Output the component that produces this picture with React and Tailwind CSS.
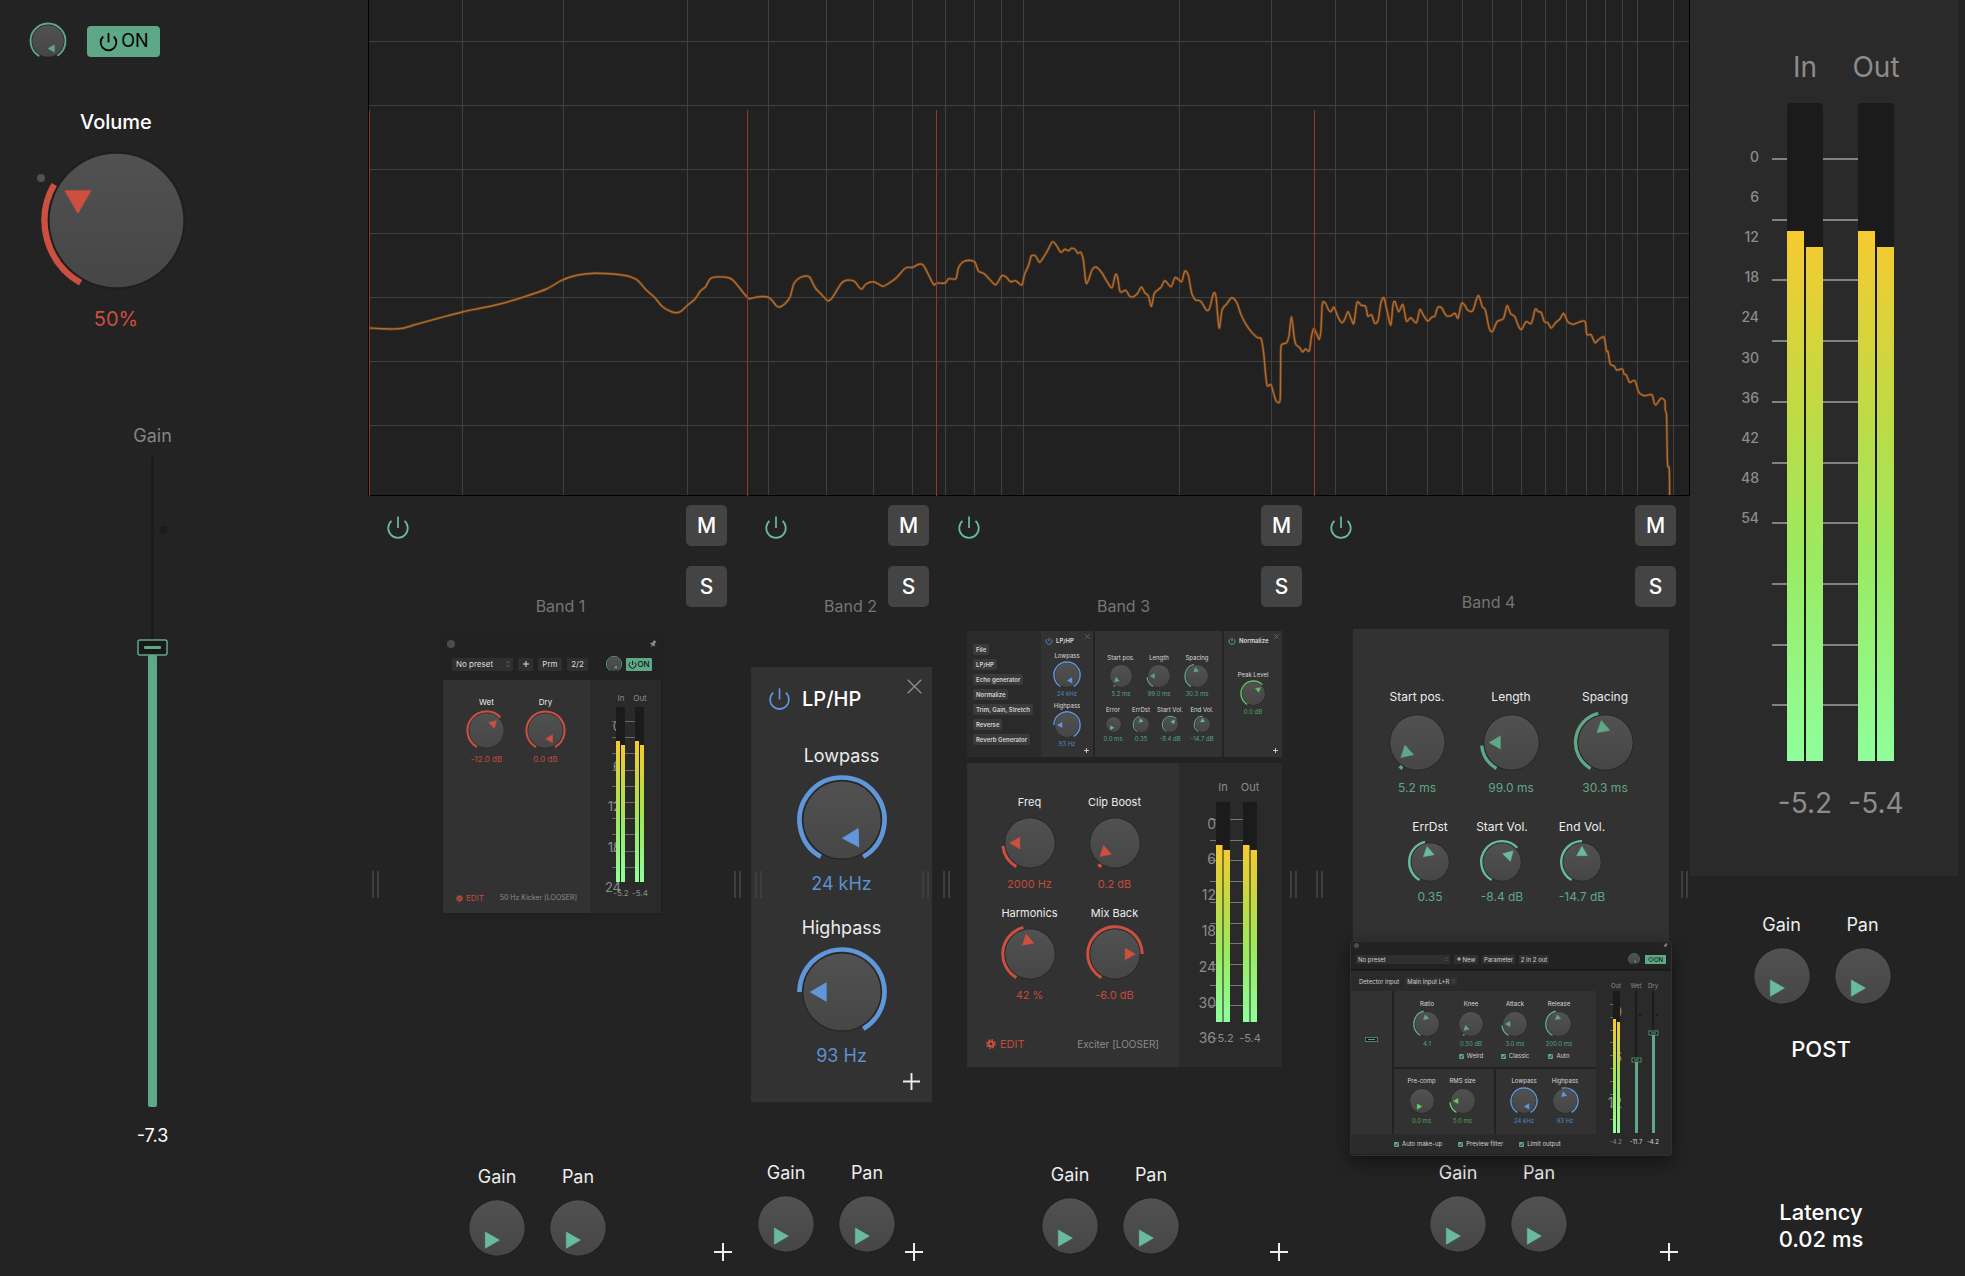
import React, { useId } from "react";

const GREEN = "#5fa887";
const MINT = "#68bb9c";
const RED = "#cc4f40";
const BLUE = "#5f97da";
const LIME = "#62c46a";

/* ---------- icons ---------- */

function PowerIcon({ size = 26, color = "currentColor", stroke = 1.6 }) {
  return (
    <svg width={size} height={size} viewBox="0 0 24 24" fill="none" stroke={color} strokeWidth={stroke} className="shrink-0">
      <path d="M6 6.3A9 9 0 1 0 18 6.3" />
      <path d="M12 2.2V13" />
    </svg>
  );
}

function PlusIcon({ size = 18, stroke = 2 }) {
  return (
    <svg width={size} height={size} viewBox="0 0 18 18" fill="none" stroke="currentColor" strokeWidth={stroke} className="shrink-0">
      <path d="M9 0V18M0 9H18" />
    </svg>
  );
}

function CloseIcon({ size = 15 }) {
  return (
    <svg width={size} height={size} viewBox="0 0 15 15" fill="none" stroke="#8c8c8c" strokeWidth="1.4">
      <path d="M0.7 0.7 14.3 14.3M14.3 0.7 0.7 14.3" />
    </svg>
  );
}

function GearIcon({ size = 10 }) {
  return (
    <svg width={size} height={size} viewBox="0 0 24 24" fill="none" stroke={RED} className="shrink-0">
      <circle cx="12" cy="12" r="6" strokeWidth="5" />
      <circle cx="12" cy="12" r="10" strokeWidth="3.6" strokeDasharray="3.9 3.95" />
    </svg>
  );
}

function PinIcon({ size = 8 }) {
  return (
    <svg width={size} height={size} viewBox="0 0 24 24" fill="#8f8f8f" stroke="#8f8f8f" strokeWidth="2">
      <g transform="rotate(35 12 12)">
        <path d="M8 2h8v2l-1.500 1v5l4 3v2H5.500v-2l4-3V5L8 4z" />
        <path d="M12 15v7" strokeWidth="2.500" />
      </g>
    </svg>
  );
}

function UpDown({ size = 6 }) {
  return (
    <svg width={size} height={size * 1.6} viewBox="0 0 10 16" fill="none" stroke="#8a8a8a" strokeWidth="1.6" className="pointer-events-none shrink-0">
      <path d="M1.500 5.500 5 1.500 8.500 5.500M1.500 10.500 5 14.500 8.500 10.500" />
    </svg>
  );
}

/* ---------- knobs ---------- */

const POINTERS = {
  big: { side: 18.5, dist: 33, arcR: 53.3, arcW: 4.7 },
  mid: { side: 23.5, dist: 27, arcR: 54.5, arcW: 6 },
  small: { side: 29, dist: 25, arcR: 54.8, arcW: 6.2 },
};

function polar(r, deg) {
  const a = ((deg - 90) * Math.PI) / 180;
  return [r * Math.cos(a), r * Math.sin(a)];
}

function Knob({ size, color = GREEN, from = -150, to, pointer, kind = "mid", name }) {
  const id = useId();
  const { side, dist, arcR, arcW } = POINTERS[kind];
  const circ = side / Math.sqrt(3);
  let arc = null;
  if (to !== undefined) {
    const [x1, y1] = polar(arcR, from);
    const [x2, y2] = polar(arcR, to);
    arc = `M${x1} ${y1}A${arcR} ${arcR} 0 ${to - from > 180 ? 1 : 0} 1 ${x2} ${y2}`;
  }
  const tri = [0, 120, 240].map((a) => polar(circ, a).join(",")).join(" ");
  return (
    <span className="relative block shrink-0">
      <svg width={size} height={size} viewBox="-50 -50 100 100" className="block overflow-visible">
        <defs>
          <linearGradient id={id} x1="0" y1="0" x2="0" y2="1">
            <stop offset="0" stopColor="#515151" />
            <stop offset="1" stopColor="#464646" />
          </linearGradient>
        </defs>
        <circle r="51" fill="#1b1b1b" opacity="0.6" />
        <circle r="49.5" fill={`url(#${id})`} />
        {arc && <path d={arc} fill="none" stroke={color} strokeWidth={arcW} />}
        <g transform={`rotate(${pointer}) translate(0 ${-dist})`}>
          <polygon points={tri} fill={color} stroke={color} strokeWidth="1" strokeLinejoin="round" />
        </g>
      </svg>
      <input type="range" aria-label={name} className="absolute inset-0 h-full w-full cursor-pointer opacity-0" />
    </span>
  );
}

function KnobField({ label, value, text, gap, className = "", valueColor, tint = "text-[#ececec]", children, ...knob }) {
  return (
    <div className={`flex flex-col items-center whitespace-nowrap ${text} ${gap} ${className}`}>
      <span className={tint}>{label}</span>
      <Knob name={label} {...knob} />
      {value && <span className={valueColor}>{value}</span>}
      {children}
    </div>
  );
}

function GainPan({ className = "" }) {
  return (
    <div className={`flex gap-[25px] ${className}`}>
      {["Gain", "Pan"].map((n) => (
        <KnobField key={n} label={n} size={56} kind="small" color={MINT} pointer={-150} text="text-[18px] leading-6" gap="gap-[11px]" className="w-14" />
      ))}
    </div>
  );
}

/* ---------- level meter ---------- */

function Meter({ width, height, bars, barW, split, top, bottom, levels, tick, scale, font, labels, values, children }) {
  const id = useId();
  const half = (barW - split) / 2;
  return (
    <svg width={width} height={height} className="block shrink-0" fontFamily="Inter, sans-serif" fill="#8c8c8c">
      <defs>
        <linearGradient id={id} gradientUnits="userSpaceOnUse" x1="0" x2="0" y1={levels[0]} y2={bottom}>
          <stop offset="0" stopColor="#f7ca30" />
          <stop offset="0.35" stopColor="#bedb45" />
          <stop offset="0.62" stopColor="#9aea62" />
          <stop offset="1" stopColor="#8fff9c" />
        </linearGradient>
      </defs>
      {Array.from({ length: tick.count }, (_, i) => (
        <rect key={i} x={tick.x1} y={Math.round(tick.y + i * tick.step)} width={tick.x2 - tick.x1} height={tick.h} fill={tick.color} />
      ))}
      {scale.map(({ y, t }) => (
        <text key={t} x={font.scaleX} y={y} fontSize={font.scale} fontWeight={font.weight} textAnchor="end" dominantBaseline="central">
          {t}
        </text>
      ))}
      {labels.map(({ x, y, t }) => (
        <text key={t} x={x} y={y} fontSize={font.label} textAnchor="middle" dominantBaseline="central">
          {t}
        </text>
      ))}
      {values.map(({ x, y, t }) => (
        <text key={t} x={x} y={y} fontSize={font.label} textAnchor="middle" dominantBaseline="central">
          {t}
        </text>
      ))}
      {bars.map((x) => (
        <g key={x}>
          <rect x={x} y={top} width={barW} height={bottom - top} rx={font.radius} fill="#1b1b1b" />
          <rect x={x} y={levels[0]} width={half} height={bottom - levels[0]} fill={`url(#${id})`} />
          <rect x={x + half + split} y={levels[1]} width={half} height={bottom - levels[1]} fill={`url(#${id})`} />
        </g>
      ))}
      {children}
    </svg>
  );
}

const scaleAt = (list, y0, step) => list.map((t, i) => ({ t: String(t), y: y0 + i * step }));

/* ---------- spectrum ---------- */

const SPECTRUM = `21,984 50,986 75,987 98,985 130,973 180,955 236,936 280,924 320,913 375,892 430,867 465,841 500,826 540,820 590,823 620,829 640,841 660,870 680,893 695,917 712,932 727,938 740,934 755,916 773,896 785,873 797,860 807,837 820,831 850,833 862,843 893,892 902,895 920,890 940,891 950,901 960,917 968,921 980,911 992,890 1000,852 1013,834 1028,828 1037,832 1050,864 1065,884 1078,902 1088,895 1110,850 1122,841 1140,844 1150,860 1157,867 1167,852 1182,845 1194,851 1206,859 1218,851 1238,832 1258,804 1275,802 1288,793 1300,797 1322,852 1330,849 1349,849 1358,836 1374,836 1380,804 1390,786 1404,781 1418,787 1426,813 1440,822 1463,853 1470,848 1480,827 1490,831 1500,845 1512,842 1526,855 1532,825 1542,795 1548,768 1558,768 1567,787 1577,770 1587,748 1597,725 1606,736 1616,757 1625,748 1634,752 1641,745 1650,749 1655,760 1662,757 1668,780 1674,847 1680,840 1688,810 1697,801 1710,817 1722,843 1734,863 1742,824 1747,832 1753,875 1766,871 1775,889 1785,889 1794,878 1802,861 1810,878 1818,888 1825,919 1832,880 1847,862 1856,842 1870,860 1879,833 1887,838 1895,844 1902,814 1910,826 1918,880 1927,900 1938,903 1952,930 1959,925 1968,881 1974,890 1981,984 1988,930 1999,911 2010,893 2022,908 2032,945 2048,983 2068,1012 2078,1016 2084,1060 2088,1120 2092,1157 2101,1155 2110,1195 2116,1207 2122,1198 2123,1110 2124,1038 2136,1029 2142,1010 2148,950 2154,1010 2158,1033 2166,1042 2174,1056 2180,1047 2189,1052 2194,1010 2199,986 2205,998 2212,1018 2216,990 2219,912 2226,909 2233,928 2239,935 2246,922 2255,950 2264,968 2271,958 2278,935 2285,955 2292,970 2299,908 2309,916 2319,919 2324,948 2333,945 2340,970 2348,960 2354,910 2361,893 2368,930 2377,975 2382,915 2387,905 2395,935 2405,914 2413,963 2423,953 2436,968 2444,929 2452,945 2462,963 2472,951 2479,948 2485,923 2494,923 2505,947 2516,947 2525,940 2532,954 2540,911 2548,916 2554,930 2566,932 2574,900 2580,887 2588,920 2595,930 2604,985 2612,994 2622,965 2637,955 2645,917 2653,940 2663,950 2672,980 2679,988 2689,965 2701,970 2710,928 2717,935 2724,938 2731,965 2739,968 2747,984 2757,968 2767,957 2776,940 2785,965 2798,973 2824,963 2829,1003 2839,1004 2848,1028 2857,1018 2869,1012 2874,1052 2878,1055 2883,1092 2892,1098 2898,1110 2911,1107 2915,1122 2920,1125 2928,1147 2940,1142 2949,1177 2962,1187 2979,1184 2984,1207 2988,1215 2994,1205 3000,1195 3009,1202 3010,1230 3013,1250 3015,1390 3019,1405 3020,1485`
  .split(" ")
  .map((p) => p.split(",").map(Number))
  .map(([x, y]) => [x / 2.306 - 8, y / 3]);

function smooth(pts) {
  let d = `M${pts[0][0].toFixed(1)} ${pts[0][1].toFixed(1)}`;
  for (let i = 0; i < pts.length - 1; i++) {
    const p0 = pts[i - 1] || pts[i];
    const p1 = pts[i];
    const p2 = pts[i + 1];
    const p3 = pts[i + 2] || p2;
    const c = [p1[0] + (p2[0] - p0[0]) / 7, p1[1] + (p2[1] - p0[1]) / 7, p2[0] - (p3[0] - p1[0]) / 7, p2[1] - (p3[1] - p1[1]) / 7];
    d += `C${c.map((n) => n.toFixed(1)).join(" ")} ${p2[0].toFixed(1)} ${p2[1].toFixed(1)}`;
  }
  return d;
}

const GRID_X = [94, 195.5, 319.5, 400, 458, 505, 544.5, 577, 606.5, 633, 655, 811, 903, 967, 1018, 1059, 1094.5, 1124.5, 1153, 1177, 1198, 1218, 1237, 1254, 1269, 1305];
const GRID_Y = [41.5, 105.5, 169.5, 233.5, 297.5, 361.5, 425.5];
const SPLITS = [1.5, 379.5, 568.5, 946.5];

function Spectrum() {
  return (
    <svg viewBox="0 0 1322 496" preserveAspectRatio="none" className="block h-[496px] w-full bg-[#212121]" fill="none">
      <g stroke="#404040" strokeWidth="1">
        {GRID_X.map((x) => (
          <path key={x} d={`M${Math.floor(x) + 0.5} 0V495`} />
        ))}
        {GRID_Y.map((y) => (
          <path key={y} d={`M0 ${y}H1321`} />
        ))}
      </g>
      <path d="M0.500 0V495.500M0 495.500H1322M1321.500 0V496" stroke="#000" />
      <path d={smooth(SPECTRUM)} stroke="#7a4310" strokeWidth="3" opacity="0.6" strokeLinejoin="round" />
      <path d={smooth(SPECTRUM)} stroke="#ad6c36" strokeWidth="1.400" strokeLinejoin="round" />
      {SPLITS.map((x) => (
        <path key={x} d={`M${x} 110V496`} stroke="#963529" strokeWidth="1" />
      ))}
    </svg>
  );
}

/* ---------- band shell ---------- */

function Handle({ className }) {
  return <span className={`absolute top-[375px] h-[27px] w-[7px] border-x-2 border-[#3e3e3e] ${className}`} />;
}

function MuteSolo({ letter, label }) {
  return (
    <button aria-label={label} className="flex h-[41px] w-[41px] items-center justify-center rounded-[5px] bg-[#444444] text-[21px] leading-6 font-medium text-white">
      {letter}
    </button>
  );
}

function Band({ n, left, right, header, label, pair, row, children }) {
  return (
    <section className="relative flex min-h-[780px] flex-col">
      <div className={`flex h-[120px] shrink-0 pt-[9px] ${header}`}>
        <button aria-label={`Band ${n} power`} className="mt-[9px] self-start">
          <PowerIcon color={MINT} />
        </button>
        <h2 className={`flex-1 self-end text-center text-[16px] leading-5 whitespace-nowrap text-[#757575] ${label}`}>Band {n}</h2>
        <div className="flex flex-col gap-5 self-start">
          <MuteSolo letter="M" label={`Mute band ${n}`} />
          <MuteSolo letter="S" label={`Solo band ${n}`} />
        </div>
      </div>
      {children}
      <div className={`mt-auto flex items-end justify-between pb-[15px] ${row}`}>
        <GainPan className={pair} />
        <button aria-label={`Add to band ${n}`} className="text-[#ececec]">
          <PlusIcon />
        </button>
      </div>
      <Handle className={left} />
      <Handle className={right} />
    </section>
  );
}

/* ---------- band 1 ---------- */

function OnButton({ className, icon, stroke }) {
  return (
    <button className={`flex items-center justify-center bg-[#5fa887] text-black ${className}`}>
      <PowerIcon size={icon} stroke={stroke} />
      ON
    </button>
  );
}

function KickerPlugin() {
  const knob = { size: 35, color: RED, text: "text-[8px] leading-[10px]", gap: "gap-1.5", valueColor: "text-[#c24a3d]", className: "w-[59px]" };
  return (
    <div className="mt-[22px] mr-[86px] ml-[73px] shadow-[0_0_4px_#1d1d1d]">
      <div className="h-[42px] bg-[#222222] text-[8px] leading-[13px] text-[#dcdcdc]">
        <div className="flex h-[19px] justify-between px-1 pt-0.5">
          <span className="h-2 w-2 rounded-full bg-[#4c4c4c]" />
          <PinIcon />
        </div>
        <div className="flex items-center px-[9px]">
          <span className="flex w-[61px] items-center rounded-[1px] bg-[#2f2f2f] pr-[3px]">
            <select aria-label="Preset" className="h-[13px] w-full appearance-none bg-transparent pl-1">
              <option>No preset</option>
            </select>
            <UpDown size={4} />
          </span>
          <button className="ml-[5px] flex h-[13px] w-[15px] items-center justify-center rounded-[1px] bg-[#2f2f2f]" aria-label="Add preset">
            <PlusIcon size={6} stroke={3} />
          </button>
          <button className="ml-[5px] h-[13px] w-6 rounded-[1px] bg-[#2f2f2f]">Prm</button>
          <button className="ml-[5px] h-[13px] w-[21px] rounded-[1px] bg-[#2f2f2f]">2/2</button>
          <span className="ml-auto">
            <Knob name="Plugin mix" size={14} to={150} pointer={150} />
          </span>
          <OnButton icon={9} stroke={2.2} className="ml-[5px] h-[13px] w-[26px] rounded-[1px]" />
        </div>
      </div>
      <div className="flex h-[233px]">
        <div className="flex flex-1 flex-col bg-[#323232]">
          <div className="flex pt-[17px] pl-3.5">
            <KnobField label="Wet" value="-12.0 dB" to={47} pointer={45} {...knob} />
            <KnobField label="Dry" value="0.0 dB" to={150} pointer={150} {...knob} />
          </div>
          <div className="mt-auto flex items-center justify-between pr-[13px] pb-2.5 pl-[13px] text-[8px] leading-[10px]">
            <button className="flex items-center gap-[3px] text-[#c24a3d]">
              <GearIcon size={7} />
              EDIT
            </button>
            <span className="text-[7px] whitespace-nowrap text-[#8a8a8a]">50 Hz Kicker [LOOSER]</span>
          </div>
        </div>
        <div className="bg-[#2a2a2a]">
          <Meter
            width={71}
            height={233}
            bars={[26, 45]}
            barW={9}
            split={1}
            top={27}
            bottom={202}
            levels={[61, 65]}
            tick={{ x1: 22, x2: 45, y: 41, step: 16.2, count: 10, h: 1, color: "#666" }}
            scale={scaleAt([0, 6, 12, 18, 24], 46, 40.2)}
            font={{ scaleX: 31, scale: 13, weight: 400, label: 8, radius: 0 }}
            labels={[{ x: 31, y: 18, t: "In" }, { x: 50, y: 18, t: "Out" }]}
            values={[{ x: 31, y: 213, t: "-5.2" }, { x: 50, y: 213, t: "-5.4" }]}
          />
        </div>
      </div>
    </div>
  );
}

/* ---------- band 2 ---------- */

function FilterPlugin() {
  const knob = { size: 78, color: BLUE, text: "text-[18px] leading-6", gap: "gap-[13px]", valueColor: "text-[#5b90d0]" };
  return (
    <div className="mt-[51px] mr-1 ml-1 flex h-[435px] flex-col bg-[#323232]">
      <div className="flex pt-[18px] pl-4">
        <button aria-label="LP/HP power" className="mt-px h-6">
          <PowerIcon size={25} color={BLUE} stroke={1.6} />
        </button>
        <h3 className="ml-2.5 flex-1 text-[20px] leading-7 font-medium text-white">LP/HP</h3>
        <button aria-label="Remove LP/HP" className="-mt-1.5 mr-2.5 self-start">
          <CloseIcon />
        </button>
      </div>
      <KnobField label="Lowpass" value="24 kHz" to={150} pointer={148} className="mt-[31px]" {...knob} />
      <KnobField label="Highpass" value="93 Hz" from={-90} to={150} pointer={-90} className="mt-5" {...knob} />
      <button aria-label="Add after LP/HP" className="mt-auto mr-3 mb-3 self-end text-[#ececec]">
        <PlusIcon size={17} />
      </button>
    </div>
  );
}

/* ---------- band 3 ---------- */

const TOOLS = ["File", "LP/HP", "Echo generator", "Normalize", "Trim, Gain, Stretch", "Reverse", "Reverb Generator"];

function RackTitle({ color, children }) {
  return (
    <div className="flex h-[19px] items-center pr-[3px] pl-1">
      <PowerIcon size={8} color={color} stroke={2.4} />
      <span className="ml-[3px] flex-1 text-[6px] leading-2 font-semibold text-[#dddddd]">{children}</span>
      <span className="self-start pt-[3px]">
        <CloseIcon size={5} />
      </span>
    </div>
  );
}

function RackPlugin() {
  const tiny = { text: "text-[6px] leading-2", tint: "text-[#d8d8d8]" };
  const top = { ...tiny, size: 22, gap: "gap-[3px]", valueColor: "text-[#56a281]", className: "w-[38px]" };
  const low = { ...tiny, size: 15, color: MINT, kind: "small", gap: "gap-[3px]", valueColor: "text-[#56a281]" };
  const filter = { ...tiny, size: 24, color: BLUE, gap: "gap-[3px]", valueColor: "text-[#4f83c0]" };
  return (
    <div className="flex h-[126px]">
      <div className="flex w-[74px] flex-col items-start gap-1 bg-[#2a2a2a] pt-[13px] pl-1.5">
        {TOOLS.map((t) => (
          <button key={t} className="h-[11px] rounded-[2px] bg-[#3a3a3a] px-[3px] text-[6px] leading-[11px] font-semibold whitespace-nowrap text-[#d4d4d4]">
            {t}
          </button>
        ))}
      </div>
      <div className="flex w-[52px] flex-col bg-[#323232]">
        <RackTitle color={BLUE}>LP/HP</RackTitle>
        <KnobField label="Lowpass" value="24 kHz" to={150} pointer={148} className="mt-0.5" {...filter} />
        <KnobField label="Highpass" value="93 Hz" from={-90} to={150} pointer={-90} className="mt-1" {...filter} />
        <span className="mt-auto mr-1 mb-1 self-end text-[#dddddd]">
          <PlusIcon size={5} stroke={3} />
        </span>
      </div>
      <div className="mx-0.5 flex flex-1 flex-col bg-[#323232]">
        <div className="flex pt-[23px] pl-[7px]">
          <KnobField label="Start pos." value="5.2 ms" to={-143} pointer={-132} {...top} />
          <KnobField label="Length" value="99.0 ms" to={-96} pointer={-90} {...top} />
          <KnobField label="Spacing" value="30.3 ms" to={-14} pointer={-11} {...top} />
        </div>
        <div className="flex pt-2 pl-1">
          <KnobField label="Error" value="0.0 ms" pointer={-150} className="w-7" {...low} />
          <KnobField label="ErrDst" value="0.35" to={-14} pointer={-11} className="w-7" {...low} />
          <KnobField label="Start Vol." value="-8.4 dB" to={47} pointer={45} className="w-[30px]" {...low} />
          <KnobField label="End Vol." value="-14.7 dB" to={0} pointer={0} className="w-[34px]" {...low} />
        </div>
      </div>
      <div className="flex w-[58px] flex-col bg-[#323232]">
        <RackTitle color={LIME}>Normalize</RackTitle>
        <KnobField {...tiny} label="Peak Level" value="0.0 dB" size={23} color={LIME} to={45} pointer={50} gap="gap-[3px]" valueColor="text-[#4ea854]" className="mt-[21px]" />
        <span className="mt-auto mr-1 mb-1 self-end text-[#dddddd]">
          <PlusIcon size={5} stroke={3} />
        </span>
      </div>
    </div>
  );
}

function ExciterPlugin() {
  const knob = { size: 50, color: RED, text: "text-[11px] leading-[14px]", gap: "gap-[9px]", valueColor: "text-[#c24a3d]", className: "w-[85px]" };
  return (
    <div className="mt-1.5 flex h-[304px]">
      <div className="flex flex-1 flex-col bg-[#323232]">
        <div className="grid grid-cols-[85px_85px] gap-y-[15px] pt-8 pl-5">
          <KnobField label="Freq" value="2000 Hz" to={-96} pointer={-90} {...knob} />
          <KnobField label="Clip Boost" value="0.2 dB" to={-142} pointer={-132} {...knob} />
          <KnobField label="Harmonics" value="42 %" to={-14} pointer={-11} {...knob} />
          <KnobField label="Mix Back" value="-6.0 dB" to={90} pointer={90} {...knob} />
        </div>
        <div className="mt-auto flex items-center justify-between pr-5 pb-4 pl-[19px] text-[11px] leading-[14px]">
          <button className="flex items-center gap-1 text-[#c24a3d]">
            <GearIcon size={10} />
            EDIT
          </button>
          <span className="text-[10px] text-[#8a8a8a]">Exciter [LOOSER]</span>
        </div>
      </div>
      <div className="bg-[#2a2a2a]">
        <Meter
          width={103}
          height={304}
          bars={[37, 64]}
          barW={14}
          split={1}
          top={39}
          bottom={259}
          levels={[82, 87]}
          tick={{ x1: 31, x2: 65, y: 56, step: 20.7, count: 10, h: 1, color: "#777" }}
          scale={scaleAt([0, 6, 12, 18, 24, 30, 36], 60, 35.8)}
          font={{ scaleX: 37, scale: 14, weight: 400, label: 11, radius: 1 }}
          labels={[{ x: 44, y: 24, t: "In" }, { x: 71, y: 24, t: "Out" }]}
          values={[{ x: 44, y: 275, t: "-5.2" }, { x: 71, y: 275, t: "-5.4" }]}
        />
      </div>
    </div>
  );
}

/* ---------- band 4 ---------- */

function EchoPlugin() {
  const top = { size: 55, text: "text-[12px] leading-4", gap: "gap-2.5", valueColor: "text-[#5fa887]", className: "w-[94px]" };
  const low = { size: 38, kind: "small", color: MINT, text: "text-[12px] leading-4", gap: "gap-2", valueColor: "text-[#5fa887]" };
  return (
    <div className="mt-[13px] mr-[21px] ml-[39px] h-[312px] bg-[#323232]">
      <div className="flex pt-[60px] pl-[17px]">
        <KnobField label="Start pos." value="5.2 ms" to={-143} pointer={-132} {...top} />
        <KnobField label="Length" value="99.0 ms" to={-96} pointer={-90} {...top} />
        <KnobField label="Spacing" value="30.3 ms" to={-14} pointer={-11} {...top} />
      </div>
      <div className="flex pt-[23px] pl-[41px]">
        <KnobField label="ErrDst" value="0.35" to={-14} pointer={-11} className="w-[72px]" {...low} />
        <KnobField label="Start Vol." value="-8.4 dB" to={47} pointer={45} className="w-[72px]" {...low} />
        <KnobField label="End Vol." value="-14.7 dB" to={0} pointer={0} className="w-[88px]" {...low} />
      </div>
    </div>
  );
}

function Check({ label }) {
  return (
    <label className="flex items-center gap-[3px] text-[6px] leading-2 whitespace-nowrap text-[#d0d0d0]">
      <span className="relative block h-[5px] w-[5px] rounded-[1px] bg-[#5fa887]">
        <svg viewBox="0 0 10 10" className="block h-full w-full" fill="none" stroke="#1d1d1d" strokeWidth="1.800">
          <path d="M2 5.200 4.200 7.500 8 2.500" />
        </svg>
        <input type="checkbox" defaultChecked className="absolute inset-0 h-full w-full opacity-0" />
      </span>
      {label}
    </label>
  );
}

function MiniFader({ x, y, name, value }) {
  return (
    <g>
      <text x={x} y={14} fontSize="6" textAnchor="middle" dominantBaseline="central">{name}</text>
      <rect x={x - 1} y="20" width="2" height={y - 20} fill="#1c1c1c" />
      <circle cx={x + 4} cy="44" r="1" fill="#161616" />
      <rect x={x - 1} y={y + 2} width="3" height={160 - y} fill={GREEN} />
      <rect x={x - 4} y={y - 2} width="9" height="4" fill="#161616" stroke={GREEN} strokeWidth="0.8" />
      <path d={`M${x - 2} ${y}h5`} stroke={GREEN} />
      <text x={x} y={170} fontSize="6" fill="#d8d8d8" textAnchor="middle" dominantBaseline="central">{value}</text>
    </g>
  );
}

function CompressorPlugin() {
  const tiny = { size: 24, text: "text-[6px] leading-2", gap: "gap-1", tint: "text-[#d8d8d8]" };
  const green = { ...tiny, valueColor: "text-[#56a281]", className: "w-11" };
  const lime = { ...tiny, color: "#66cc66", valueColor: "text-[#4ea854]", className: "w-[41px]" };
  const blue = { ...tiny, color: BLUE, valueColor: "text-[#4f83c0]", className: "w-[41px]" };
  return (
    <div className="relative mr-[18px] ml-9 rounded-[3px] border border-[#303030] bg-[#222222] shadow-[0_6px_16px_#141414]">
      <div className="h-[29px] border-b-2 border-[#1b1b1b] text-[6px] leading-[9px] text-[#d0d0d0]">
        <div className="flex h-3 justify-between px-[3px] pt-px">
          <span className="h-[5px] w-[5px] rounded-full bg-[#4c4c4c]" />
          <PinIcon size={5} />
        </div>
        <div className="flex items-center gap-1 px-[5px]">
          <span className="flex w-[94px] items-center bg-[#2f2f2f] pr-[2px]">
            <select aria-label="Compressor preset" className="h-[9px] w-full appearance-none bg-transparent pl-0.5">
              <option>No preset</option>
            </select>
            <UpDown size={3} />
          </span>
          <button className="flex h-[9px] w-6 items-center justify-center gap-0.5 bg-[#2f2f2f] whitespace-nowrap">
            <PlusIcon size={4} stroke={4} />
            New
          </button>
          <button className="h-[9px] w-[33px] bg-[#2f2f2f]">Parameter</button>
          <button className="h-[9px] w-[30px] bg-[#2f2f2f] whitespace-nowrap">2 in 2 out</button>
          <span className="ml-auto">
            <Knob name="Compressor mix" size={10} to={150} pointer={150} />
          </span>
          <OnButton icon={6} stroke={2.4} className="ml-0.5 h-[9px] w-[21px]" />
        </div>
      </div>
      <div className="flex">
        <div className="flex flex-1 flex-col">
          <div className="flex h-5 items-center gap-1.5 bg-[#2a2a2a] pl-2 text-[6px] leading-[9px] text-[#d0d0d0]">
            <label htmlFor="detector">Detector input</label>
            <span className="flex items-center bg-[#303030] pr-[2px]">
              <select id="detector" className="h-[9px] appearance-none bg-transparent px-0.5">
                <option>Main input L+R</option>
              </select>
              <UpDown size={3} />
            </span>
          </div>
          <div className="flex gap-0.5">
            <div className="flex w-[41px] flex-col items-center bg-[#323232] pt-[46px]">
              <span className="flex h-[5px] w-[13px] items-center border border-[#4b8069] bg-[#161616] px-0.5">
                <span className="h-px w-full bg-[#5fa887]" />
              </span>
            </div>
            <div className="flex flex-1 flex-col gap-0.5">
              <div className="flex h-[76px] bg-[#323232] pt-[9px] pl-[11px]">
                <KnobField label="Ratio" value="4:1" to={-14} pointer={-11} {...green} />
                <KnobField label="Knee" value="0.50 dB" to={-143} pointer={-132} {...green}>
                  <Check label="Weird" />
                </KnobField>
                <KnobField label="Attack" value="3.0 ms" to={-96} pointer={-90} {...green}>
                  <Check label="Classic" />
                </KnobField>
                <KnobField label="Release" value="200.0 ms" to={-14} pointer={-11} {...green}>
                  <Check label="Auto" />
                </KnobField>
              </div>
              <div className="flex h-[65px] gap-0.5">
                <div className="flex flex-1 bg-[#323232] pt-2 pl-[7px]">
                  <KnobField label="Pre-comp" value="0.0 ms" pointer={-150} {...lime} />
                  <KnobField label="RMS size" value="5.0 ms" to={-96} pointer={-90} {...lime} />
                </div>
                <div className="flex flex-1 bg-[#323232] pt-2 pl-2">
                  <KnobField label="Lowpass" value="24 kHz" to={150} pointer={148} {...blue} />
                  <KnobField label="Highpass" value="93 Hz" from={-14} to={150} pointer={-11} {...blue} />
                </div>
              </div>
            </div>
          </div>
          <div className="flex h-5 items-center gap-4 bg-[#2a2a2a] pl-[43px]">
            <Check label="Auto make-up" />
            <Check label="Preview filter" />
            <Check label="Limit output" />
          </div>
        </div>
        <div className="bg-[#2a2a2a]">
          <Meter
            width={75}
            height={184}
            bars={[17]}
            barW={7}
            split={1}
            top={20}
            bottom={162}
            levels={[48, 51]}
            tick={{ x1: 14, x2: 24, y: 33, step: 12.8, count: 10, h: 1, color: "#666" }}
            scale={scaleAt([0, 6, 12], 40, 45.5)}
            font={{ scaleX: 26, scale: 14, weight: 400, label: 6, radius: 0 }}
            labels={[{ x: 20, y: 14, t: "Out" }]}
            values={[{ x: 20, y: 170, t: "-4.2" }]}
          >
            <MiniFader x={40} y={89} name="Wet" value="-11.7" />
            <MiniFader x={57} y={62} name="Dry" value="-4.2" />
          </Meter>
        </div>
      </div>
    </div>
  );
}

/* ---------- side columns ---------- */

function LeftColumn() {
  return (
    <aside className="flex w-[368px] shrink-0 flex-col">
      <div className="flex items-center gap-[23px] pt-[25px] pl-8">
        <Knob name="Mix" size={32} to={148} pointer={150} />
        <OnButton icon={21} stroke={2} className="h-[31px] w-[73px] gap-0.5 rounded-[4px] text-[18px] leading-6" />
      </div>
      <div className="relative mt-[51px] w-[232px]">
        <KnobField label="Volume" value="50%" size={135} kind="big" color={RED} to={-60} pointer={-60} text="text-[20px] leading-7 font-medium" gap="gap-[17px]" tint="text-white" valueColor="font-normal text-[#cc4f40]" />
        <span className="absolute top-[66px] left-[37px] h-2 w-2 rounded-full bg-[#505050]" />
      </div>
      <div className="mt-[91px] flex w-[305px] flex-col items-center text-[18px] leading-6">
        <label htmlFor="gain" className="text-[#858585]">Gain</label>
        <div className="relative mt-[9px]">
          <svg width="31" height="650" className="block overflow-visible">
            <rect x="14" y="0" width="3" height="184" rx="1.500" fill="#1b1b1b" />
            <circle cx="26.500" cy="73" r="4" fill="#1b1b1b" />
            <rect x="11" y="198" width="9" height="452" rx="2" fill={GREEN} />
            <rect x="1" y="183" width="29" height="15" rx="2" fill="#191919" stroke={GREEN} strokeWidth="1.500" />
            <rect x="7" y="189" width="17" height="3" rx="1" fill={GREEN} />
          </svg>
          <input id="gain" type="range" className="absolute inset-0 h-full w-full opacity-0" />
        </div>
        <span className="mt-[17px] text-white">-7.3</span>
      </div>
    </aside>
  );
}

function RightColumn() {
  return (
    <aside className="flex w-[275px] shrink-0 flex-col">
      <div className="mr-[7px] bg-[#2a2a2a]">
        <Meter
          width={268}
          height={876}
          bars={[97, 168]}
          barW={36}
          split={2}
          top={103}
          bottom={761}
          levels={[231, 247]}
          tick={{ x1: 82, x2: 169, y: 158, step: 60.7, count: 10, h: 2, color: "#828282" }}
          scale={scaleAt([0, 6, 12, 18, 24, 30, 36, 42, 48, 54], 156, 40.2)}
          font={{ scaleX: 69, scale: 14, weight: 500, label: 28, radius: 4 }}
          labels={[{ x: 115, y: 67, t: "In" }, { x: 186, y: 67, t: "Out" }]}
          values={[{ x: 115, y: 803, t: "-5.2" }, { x: 186, y: 803, t: "-5.4" }]}
        />
      </div>
      <div className="flex w-[262px] flex-1 flex-col items-center pt-[37px] pb-[23px] text-[22px] font-medium text-white">
        <div className="ml-0.5 font-normal">
          <GainPan />
        </div>
        <h2 className="mt-[31px] leading-7">POST</h2>
        <p className="mt-auto text-center leading-[27px]">
          Latency
          <br />
          0.02 ms
        </p>
      </div>
    </aside>
  );
}

export default function App() {
  return (
    <div className="flex min-h-screen bg-[#232323] font-['Inter',sans-serif] [font-optical-sizing:none]">
      <LeftColumn />
      <main className="flex min-w-0 flex-1 flex-col">
        <Spectrum />
        <div className="grid flex-1 grid-cols-[377fr_189fr_378fr_376fr] pl-0.5">
          <Band n={1} left="left-0.5" right="right-1.5" header="pl-[15px] pr-5" label="pl-6" row="pl-[99px] pr-[15px]" pair="mb-[5px]">
            <KickerPlugin />
          </Band>
          <Band n={2} left="left-2" right="right-[7px]" header="pl-4 pr-[7px]" label="pl-6" row="pl-[11px] pr-[13px]" pair="mb-[9px]">
            <FilterPlugin />
          </Band>
          <Band n={3} left="left-[7px]" right="right-[17px]" header="pl-5 pr-3" label="pl-1" row="pl-[106px] pr-[26px]" pair="mb-[7px]">
            <div className="mt-[15px] mr-8 ml-[31px]">
              <RackPlugin />
              <ExciterPlugin />
            </div>
          </Band>
          <Band n={4} left="left-0.5" right="right-0.5" header="pl-3.5 pr-3.5" label="pr-3 pb-1" row="pl-[116px] pr-3" pair="mb-[9px]">
            <EchoPlugin />
            <CompressorPlugin />
          </Band>
        </div>
      </main>
      <RightColumn />
    </div>
  );
}
